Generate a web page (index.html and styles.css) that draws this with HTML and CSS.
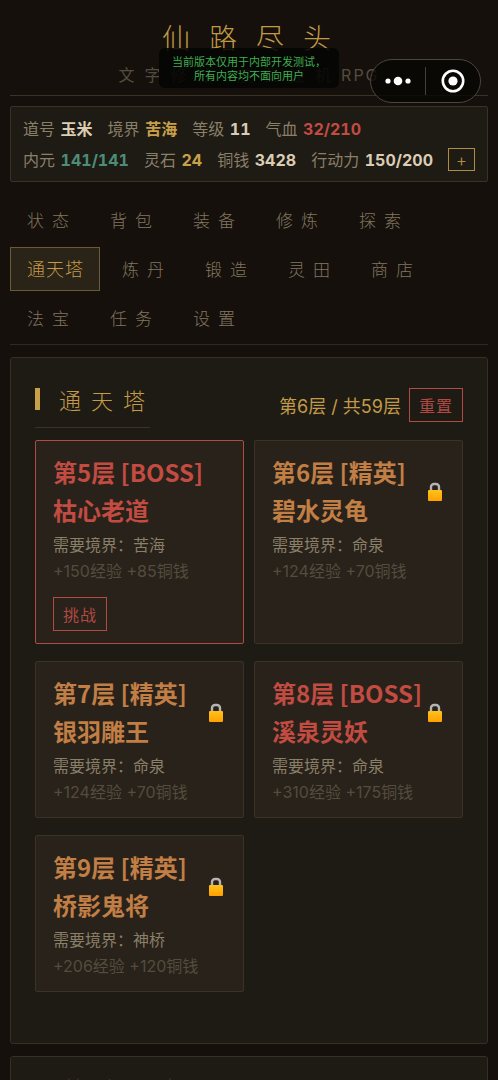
FILE: index.html
```html
<!DOCTYPE html>
<html lang="zh-CN">

<head>
    <meta charset="UTF-8">
    <meta name="viewport" content="width=device-width, initial-scale=1.0">
    <title>仙路尽头</title>
    <link rel="stylesheet" href="styles.css">
</head>

<body>
    <header class="header">
        <h1 class="title">仙路尽头</h1>
        <p class="subtitle">文字修仙·放置挂机<span class="latin">RPG</span></p>
    </header>

    <!-- 测试提示 -->
    <div class="notice">当前版本仅用于内部开发测试，<br>所有内容均不面向用户</div>

    <!-- 小程序胶囊按钮 -->
    <div class="capsule">
        <button class="capsule-btn" aria-label="更多">
            <svg width="26" height="10" viewBox="0 0 26 10" fill="#fff">
                <circle cx="3" cy="5" r="2.6" />
                <circle cx="13" cy="5" r="4.3" />
                <circle cx="23" cy="5" r="2.6" />
            </svg>
        </button>
        <button class="capsule-btn" aria-label="关闭">
            <svg width="24" height="24" viewBox="0 0 24 24">
                <circle cx="12" cy="12" r="10.2" fill="none" stroke="#fff" stroke-width="2.6" />
                <circle cx="12" cy="12" r="4.6" fill="#fff" />
            </svg>
        </button>
    </div>

    <!-- 角色状态 -->
    <section class="status-bar">
        <div class="status-row">
            <span>道号 <b>玉米</b></span>
            <span>境界 <b class="gold">苦海</b></span>
            <span>等级 <b>11</b></span>
            <span>气血 <b class="red">32/210</b></span>
        </div>
        <div class="status-row">
            <span>内元 <b class="green">141/141</b></span>
            <span>灵石 <b class="gold">24</b></span>
            <span>铜钱 <b>3428</b></span>
            <span>行动力 <b>150/200</b></span>
            <button class="add-btn">+</button>
        </div>
    </section>

    <nav class="tabs">
        <button class="tab">状态</button>
        <button class="tab">背包</button>
        <button class="tab">装备</button>
        <button class="tab">修炼</button>
        <button class="tab">探索</button>
        <button class="tab active">通天塔</button>
        <button class="tab">炼丹</button>
        <button class="tab">锻造</button>
        <button class="tab">灵田</button>
        <button class="tab">商店</button>
        <button class="tab">法宝</button>
        <button class="tab">任务</button>
        <button class="tab">设置</button>
    </nav>

    <!-- 通天塔 -->
    <main class="panel tower">
        <div class="panel-head">
            <h2 class="panel-title">通天塔</h2>
            <div class="progress">
                <span>第6层 / 共59层</span>
                <button class="small-btn">重置</button>
            </div>
        </div>

        <div class="floors">
            <article class="floor boss current">
                <h3>第5层 [BOSS]<br>枯心老道</h3>
                <p class="need">需要境界：苦海</p>
                <p class="reward">+150经验 +85铜钱</p>
                <button class="small-btn">挑战</button>
            </article>
            <article class="floor">
                <h3>第6层 [精英]<br>碧水灵龟</h3>
                <p class="need">需要境界：命泉</p>
                <p class="reward">+124经验 +70铜钱</p>
                <svg class="lock" viewBox="0 0 16 20"><use href="#lock" /></svg>
            </article>
            <article class="floor">
                <h3>第7层 [精英]<br>银羽雕王</h3>
                <p class="need">需要境界：命泉</p>
                <p class="reward">+124经验 +70铜钱</p>
                <svg class="lock" viewBox="0 0 16 20"><use href="#lock" /></svg>
            </article>
            <article class="floor boss">
                <h3>第8层 [BOSS]<br>溪泉灵妖</h3>
                <p class="need">需要境界：命泉</p>
                <p class="reward">+310经验 +175铜钱</p>
                <svg class="lock" viewBox="0 0 16 20"><use href="#lock" /></svg>
            </article>
            <article class="floor">
                <h3>第9层 [精英]<br>桥影鬼将</h3>
                <p class="need">需要境界：神桥</p>
                <p class="reward">+206经验 +120铜钱</p>
                <svg class="lock" viewBox="0 0 16 20"><use href="#lock" /></svg>
            </article>
        </div>
    </main>

    <section class="panel log">
        <h2 class="log-title">战斗日志</h2>
    </section>

    <svg class="defs" width="0" height="0">
        <defs>
            <linearGradient id="lockBody" x1="0" y1="0" x2="0" y2="1">
                <stop offset="0" stop-color="#ffc21c" />
                <stop offset="1" stop-color="#ffa000" />
            </linearGradient>
            <symbol id="lock" viewBox="0 0 16 20">
                <path d="M4 9V5a3 3 0 0 1 3-3h2a3 3 0 0 1 3 3v4" fill="none" stroke="#b4b4b4" stroke-width="2.4" />
                <rect x="1" y="8" width="14" height="11" rx="1" fill="url(#lockBody)" />
            </symbol>
        </defs>
    </svg>
</body>

</html>
```

FILE: styles.css
```css
* {
    box-sizing: border-box;
}

body {
    font-family: "Noto Sans CJK SC", sans-serif;
    background-color: #15100c;
    color: #8a7f68;
    margin: 0;
    padding: 0 10px;
    height: 100vh;
    overflow: hidden;
}

h1,
h2,
h3,
p {
    margin: 0;
    font-weight: normal;
}

button {
    font-family: inherit;
    background: none;
    border: none;
    padding: 0;
    cursor: pointer;
}

/* 顶部标题 */
.header {
    padding-top: 17px;
    height: 96px;
    text-align: center;
    border-bottom: 1px solid #3a3222;
}

.title {
    color: #c09a45;
    font-size: 28px;
    font-weight: 300;
    line-height: 40px;
    letter-spacing: 19px;
    text-indent: 14px;
}

.subtitle {
    color: #544c3e;
    font-family: Inter, "Noto Sans CJK SC", sans-serif;
    font-size: 16px;
    line-height: 24px;
    letter-spacing: 10px;
    margin-top: 6px;
}

.latin {
    letter-spacing: 2px;
}

.notice {
    position: absolute;
    top: 48px;
    left: 50%;
    width: 180px;
    margin-left: -90px;
    padding: 6px 0;
    background: rgba(5, 5, 3, 0.88);
    border-radius: 6px;
    color: #3fae50;
    font-size: 11px;
    line-height: 14px;
    text-align: center;
    white-space: nowrap;
}

.capsule {
    position: absolute;
    top: 59px;
    right: 17px;
    width: 111px;
    height: 44px;
    display: flex;
    align-items: center;
    background: rgba(8, 6, 4, 0.8);
    border: 1px solid #4a463e;
    border-radius: 22px;
}

.capsule-btn {
    flex: 1;
    display: flex;
    justify-content: center;
}

.capsule-btn + .capsule-btn {
    border-left: 1px solid #45413a;
    height: 28px;
    align-items: center;
}

/* 角色状态 */
.status-bar {
    margin-top: 10px;
    padding: 6px 12px;
    background-color: #1e1a14;
    border: 1px solid #3a3222;
    border-radius: 2px;
    font-size: 16px;
    line-height: 31px;
}

.status-row {
    display: flex;
    align-items: center;
    gap: 15px;
    height: 31px;
    white-space: nowrap;
}

.status-bar b {
    margin-left: 2px;
    color: #dacdb4;
    font-family: Inter, "Noto Sans CJK SC", sans-serif;
    font-variant-numeric: tabular-nums;
}

.status-bar .gold {
    color: #c9a04a;
}

.status-bar .red {
    color: #c24b42;
}

.status-bar .green {
    color: #4d8d78;
}

.add-btn {
    width: 29px;
    height: 23px;
    margin-left: auto;
    border: 1px solid #b08d3e;
    color: #b08d3e;
    font-size: 16px;
    line-height: 20px;
}

/* 导航 */
.tabs {
    display: flex;
    flex-wrap: wrap;
    gap: 5px;
    margin-top: 16px;
    padding-bottom: 4px;
    border-bottom: 1px solid #30291e;
}

.tab {
    height: 44px;
    padding: 0 10px 2px 16px;
    border: 1px solid transparent;
    color: #81765f;
    font-size: 17px;
    font-weight: 300;
    letter-spacing: 8px;
}

.tab.active {
    padding: 0 15px 2px 16px;
    background-color: #2a2318;
    border-color: #6b5a34;
    color: #c39b48;
    font-size: 18px;
    letter-spacing: 1px;
}

/* 面板 */
.panel {
    margin-top: 12px;
    padding: 24px;
    background-color: #1e1a14;
    border: 1px solid #352f24;
    border-radius: 3px;
}

.tower {
    padding-bottom: 51px;
}

.panel-head {
    display: flex;
    justify-content: space-between;
    align-items: flex-start;
    margin-bottom: 12px;
}

.panel-title {
    display: flex;
    align-items: center;
    width: 115px;
    height: 46px;
    padding-bottom: 12px;
    border-bottom: 1px solid #3a3222;
    color: #c39b48;
    font-size: 22px;
    font-weight: 300;
    letter-spacing: 10px;
    white-space: nowrap;
}

.panel-title::before {
    content: "";
    flex: none;
    width: 5px;
    height: 22px;
    margin-right: 19px;
    background-color: #c9a04a;
}

.progress {
    display: flex;
    align-items: center;
    gap: 8px;
    margin-top: 6px;
    color: #c39b48;
    font-family: Inter, "Noto Sans CJK SC", sans-serif;
    font-size: 18px;
}

.small-btn {
    height: 34px;
    padding: 0 9px;
    border: 1px solid #b04a42;
    color: #b04a42;
    font-size: 16px;
    letter-spacing: 1px;
}

/* 楼层卡片 */
.floors {
    display: grid;
    grid-template-columns: 1fr 1fr;
    gap: 17px 10px;
}

.floor {
    position: relative;
    padding: 12px 17px;
    background-color: #28221a;
    border: 1px solid #3a3325;
    border-radius: 2px;
}

.floor.current {
    border-color: #b04a42;
}

.floor h3 {
    color: #c17e45;
    font-size: 24px;
    font-weight: bold;
    line-height: 38px;
}

.floor.boss h3 {
    color: #c24b42;
}

.need {
    margin-top: 2px;
    color: #8a7f68;
    font-size: 16px;
    line-height: 27px;
}

.reward {
    color: #544c3e;
    font-family: Inter, "Noto Sans CJK SC", sans-serif;
    font-size: 16px;
    line-height: 26px;
}

.floor .small-btn {
    margin-top: 13px;
}

.lock {
    position: absolute;
    top: 41px;
    right: 19px;
    width: 16px;
    height: 20px;
}

/* 日志 */
.log {
    padding-top: 14px;
}

.log-title {
    padding-left: 28px;
    color: #443c2e;
    font-size: 22px;
    font-weight: 300;
    letter-spacing: 10px;
}

.defs {
    display: block;
}
```
